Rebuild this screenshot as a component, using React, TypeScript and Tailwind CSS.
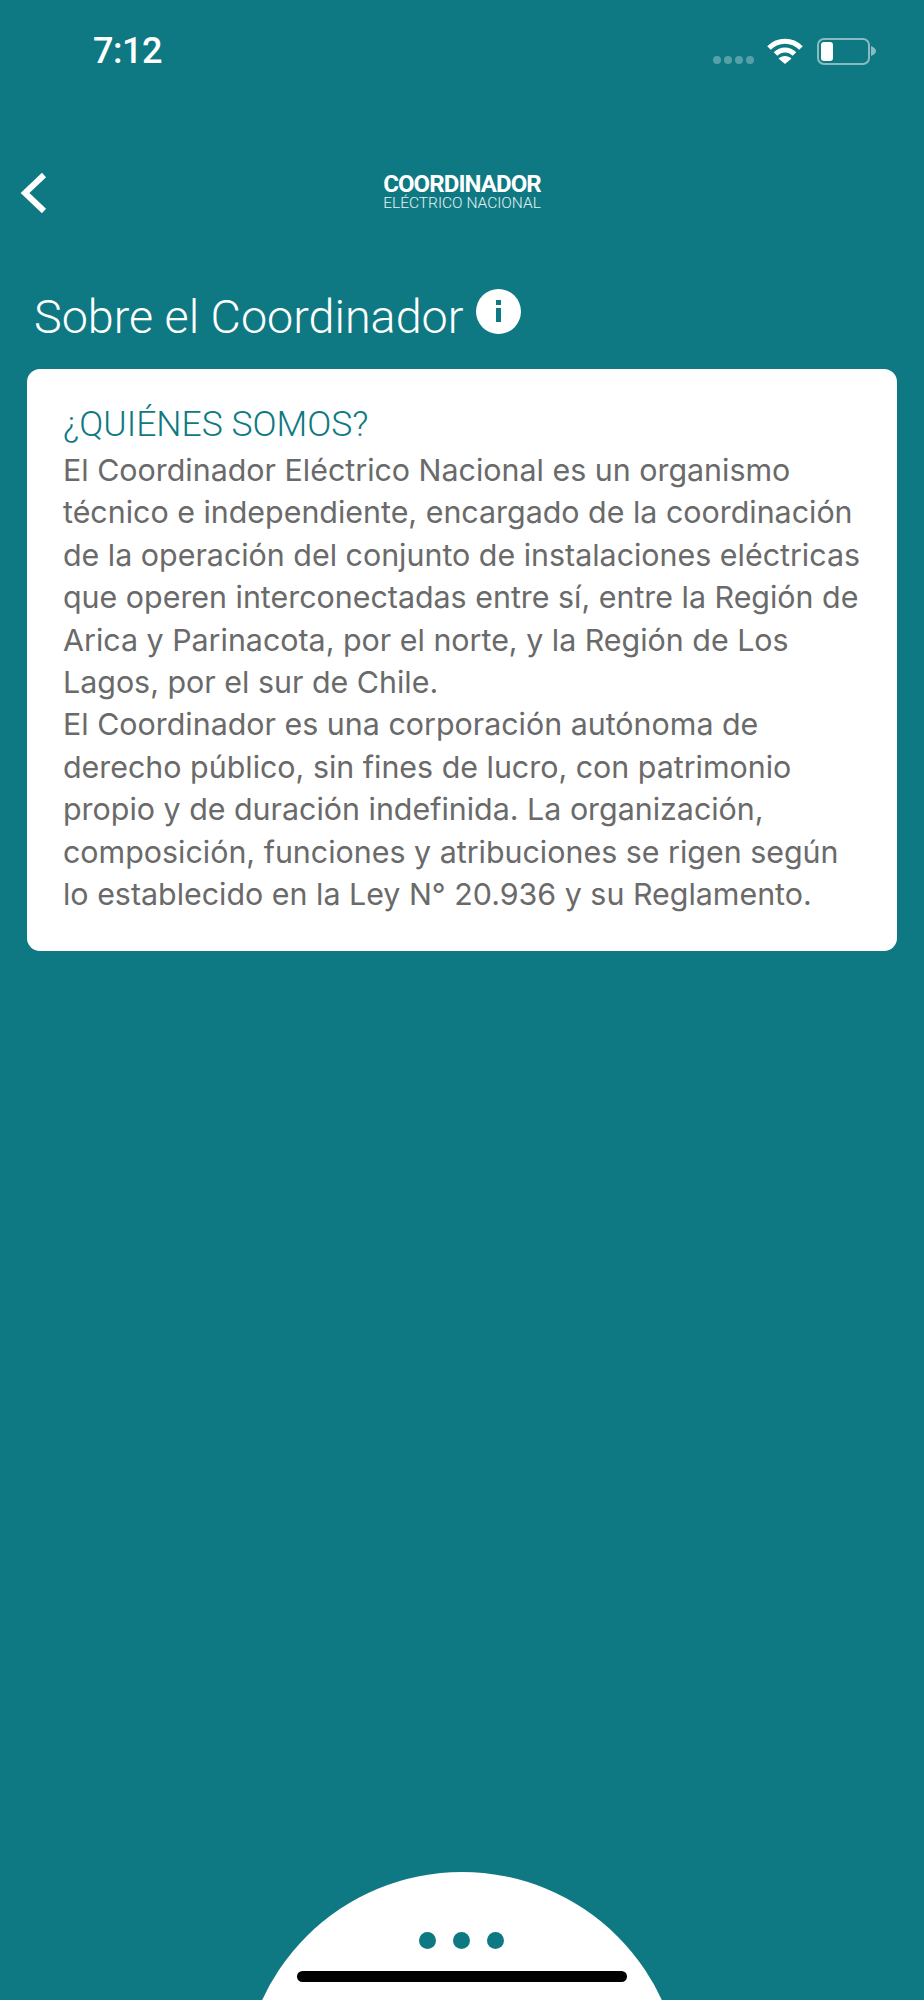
const teal = "#0e7982";

function WifiIcon() {
  return (
    <svg width="36" height="26" viewBox="0 0 36 26" fill="none" stroke="#fff" strokeWidth="5">
      <path d="M2 10C11 1 25 1 34 10" />
      <path d="M8.5 16C14 10.5 22 10.5 27.5 16" />
      <path d="M18 26L11.5 20.5C15 17 21 17 24.5 20.5Z" fill="#fff" stroke="none" />
    </svg>
  );
}

function BatteryIcon() {
  return (
    <div className="flex items-center">
      <div className="w-[53px] h-[27px] rounded-[7px] border-2 border-white/50 flex items-center pl-[2px]">
        <div className="w-[12px] h-[19px] rounded-[3px] bg-white"></div>
      </div>
      <svg width="5" height="10" viewBox="0 0 5 10" className="ml-[1px]">
        <path d="M0 0C3 1 5 3 5 5C5 7 3 9 0 10Z" fill="#ffffff" fillOpacity="0.5" />
      </svg>
    </div>
  );
}

function InfoIcon() {
  return (
    <svg width="45" height="45" viewBox="0 0 45 45" className="flex-shrink-0">
      <circle cx="22.5" cy="22.5" r="22.5" fill="#fff" />
      <rect x="20" y="11" width="5" height="5" fill={teal} />
      <rect x="20" y="19" width="5" height="14" fill={teal} />
    </svg>
  );
}

export default function App() {
  return (
    <div className="relative w-[924px] h-[2000px] overflow-hidden bg-[#0e7982] font-['Roboto',sans-serif]">
      {/* status bar */}
      <div className="flex items-center justify-between h-[36px] mt-[33px] pl-[93px] pr-[48px]">
        <span className="text-[36px] font-medium text-white leading-none tracking-[-0.5px]">7:12</span>
        <div className="flex items-center">
          <div className="flex gap-[3px] mt-[18px] mr-[13px]">
            <span className="w-[8px] h-[8px] rounded-full bg-white/30"></span>
            <span className="w-[8px] h-[8px] rounded-full bg-white/30"></span>
            <span className="w-[8px] h-[8px] rounded-full bg-white/30"></span>
            <span className="w-[8px] h-[8px] rounded-full bg-white/30"></span>
          </div>
          <WifiIcon />
          <div className="ml-[14px]">
            <BatteryIcon />
          </div>
        </div>
      </div>

      {/* nav */}
      <div className="relative flex items-center justify-center h-[42px] mt-[103px]">
        <svg width="28" height="42" viewBox="0 0 28 42" fill="none" stroke="#fff" strokeWidth="6" className="absolute left-[20px] top-0">
          <path d="M24 3L5 21L24 39" />
        </svg>
        <div className="flex flex-col items-center text-white -mt-[5px]">
          <span className="text-[24px] font-bold leading-[24px] tracking-[-0.9px]">COORDINADOR</span>
          <span className="text-[15.5px] font-light leading-[14px] text-white/90">ELÉCTRICO NACIONAL</span>
        </div>
      </div>

      {/* title */}
      <div className="flex items-start gap-[12px] mt-[75px] pl-[34px] h-[45px]">
        <h1 className="text-[46.7px] font-light leading-[56px] text-white">Sobre el Coordinador</h1>
        <InfoIcon />
      </div>

      {/* card */}
      <div className="mt-[35px] mx-[27px] bg-white rounded-[13px] px-[36px] pt-[30px] h-[582px]">
        <h2 className="text-[35.5px] font-light leading-[50px] text-[#0e7982]">¿QUIÉNES SOMOS?</h2>
        <div className="text-[30.4px] leading-[42.4px] text-[#6a6a6a] font-['Inter',sans-serif]">
          <p>
            El Coordinador Eléctrico Nacional es un organismo<br />
            técnico e independiente, encargado de la coordinación<br />
            de la operación del conjunto de instalaciones eléctricas<br />
            que operen interconectadas entre sí, entre la Región de<br />
            Arica y Parinacota, por el norte, y la Región de Los<br />
            Lagos, por el sur de Chile.
          </p>
          <p>
            El Coordinador es una corporación autónoma de<br />
            derecho público, sin fines de lucro, con patrimonio<br />
            propio y de duración indefinida. La organización,<br />
            composición, funciones y atribuciones se rigen según<br />
            lo establecido en la Ley N° 20.936 y su Reglamento.
          </p>
        </div>
      </div>

      {/* bottom half-circle menu */}
      <div className="absolute left-[242px] top-[1872px] w-[440px] h-[440px] rounded-full bg-white flex justify-center gap-[17px] pt-[60px] pr-[2px]">
        <span className="w-[17px] h-[17px] rounded-full bg-[#0e7982]"></span>
        <span className="w-[17px] h-[17px] rounded-full bg-[#0e7982]"></span>
        <span className="w-[17px] h-[17px] rounded-full bg-[#0e7982]"></span>
      </div>
      <div className="absolute left-[297px] top-[1971px] w-[330px] h-[11px] rounded-full bg-black"></div>
    </div>
  );
}
